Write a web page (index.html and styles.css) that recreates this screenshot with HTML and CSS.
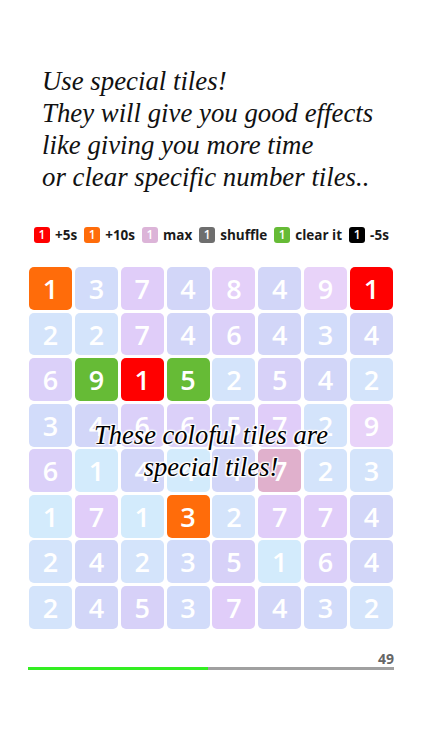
FILE: index.html
```html
<!DOCTYPE html>
<html>
<head>
<meta charset="utf-8">
<link rel="stylesheet" href="styles.css">
</head>
<body>
<div class="page">
  <div class="intro">
    <div>Use special tiles!</div>
    <div>They will give you good effects</div>
    <div>like giving you more time</div>
    <div>or clear specific number tiles..</div>
  </div>

  <div class="legend">
    <div class="item"><span class="badge red">1</span><span class="lbl">+5s</span></div>
    <div class="item"><span class="badge orange">1</span><span class="lbl">+10s</span></div>
    <div class="item"><span class="badge pink">1</span><span class="lbl">max</span></div>
    <div class="item"><span class="badge gray">1</span><span class="lbl">shuffle</span></div>
    <div class="item"><span class="badge green">1</span><span class="lbl">clear it</span></div>
    <div class="item"><span class="badge black">1</span><span class="lbl">-5s</span></div>
  </div>

  <div class="board">
    <div class="grid">
      <div class="t orange">1</div><div class="t n3">3</div><div class="t n7">7</div><div class="t n4">4</div><div class="t n8">8</div><div class="t n4">4</div><div class="t n9">9</div><div class="t red">1</div>
      <div class="t n2">2</div><div class="t n2">2</div><div class="t n7">7</div><div class="t n4">4</div><div class="t n6">6</div><div class="t n4">4</div><div class="t n3">3</div><div class="t n4">4</div>
      <div class="t n6">6</div><div class="t green">9</div><div class="t red">1</div><div class="t green">5</div><div class="t n2">2</div><div class="t n5">5</div><div class="t n4">4</div><div class="t n2">2</div>
      <div class="t n3">3</div><div class="t n4">4</div><div class="t n6">6</div><div class="t n6">6</div><div class="t n5">5</div><div class="t n7">7</div><div class="t n2">2</div><div class="t n9">9</div>
      <div class="t n6">6</div><div class="t n1">1</div><div class="t n4">4</div><div class="t n1">4</div><div class="t n4">4</div><div class="t maxt">7</div><div class="t n2">2</div><div class="t n2">3</div>
      <div class="t n1">1</div><div class="t n7">7</div><div class="t n1">1</div><div class="t orange">3</div><div class="t n2">2</div><div class="t n7">7</div><div class="t n7">7</div><div class="t n4">4</div>
      <div class="t n2">2</div><div class="t n4">4</div><div class="t n2">2</div><div class="t n3">3</div><div class="t n5">5</div><div class="t n1">1</div><div class="t n6">6</div><div class="t n4">4</div>
      <div class="t n2">2</div><div class="t n4">4</div><div class="t n5">5</div><div class="t n3">3</div><div class="t n7">7</div><div class="t n4">4</div><div class="t n3">3</div><div class="t n2">2</div>
    </div>
    <div class="overlay">
      <div>These coloful tiles are</div>
      <div>special tiles!</div>
    </div>
  </div>

  <div class="footer">
    <div class="score">49</div>
    <div class="bar"><div class="fill"></div></div>
  </div>
</div>
</body>
</html>
```
FILE: styles.css
```css
html, body {
  margin: 0;
  padding: 0;
  background: #ffffff;
}
.page {
  width: 422px;
  height: 750px;
  overflow: hidden;
  padding-top: 65px;
  box-sizing: border-box;
}
.intro {
  margin-left: 42px;
  font-family: "Liberation Serif", serif;
  font-style: italic;
  font-size: 26.8px;
  line-height: 32px;
  color: #111;
}
.legend {
  display: flex;
  align-items: center;
  gap: 7px;
  margin-top: 34px;
  margin-left: 34px;
  height: 16px;
  font-family: "Open Sans", sans-serif;
  font-weight: 700;
  font-size: 13.5px;
  color: #1a1a1a;
}
.item {
  display: flex;
  align-items: center;
  gap: 5px;
}
.badge {
  width: 16px;
  height: 16px;
  border-radius: 3px;
  color: #fff;
  font-size: 12px;
  font-weight: 600;
  line-height: 16px;
  text-align: center;
}
.lbl { line-height: 16px; }
.badge.red { background: #ff0000; }
.badge.orange { background: #ff6c0a; }
.badge.pink { background: #dcb4d8; }
.badge.gray { background: #6e6e6e; }
.badge.green { background: #66bb36; }
.badge.black { background: #000000; }

.board {
  position: relative;
  margin-top: 24px;
  margin-left: 29px;
  width: 364px;
}
.grid {
  display: grid;
  grid-template-columns: repeat(8, 1fr);
  grid-auto-rows: 42.9px;
  gap: 2.7px;
}
.t {
  border-radius: 5px;
  color: #fff;
  font-family: "Open Sans", sans-serif;
  font-weight: 600;
  font-size: 27px;
  display: flex;
  align-items: center;
  justify-content: center;
}
.n1 { background: #d3ebfc; }
.n2 { background: #d4e4fb; }
.n3 { background: #d2dcfa; }
.n4 { background: #d2d6f8; }
.n5 { background: #d7d1f8; }
.n6 { background: #dbd0f9; }
.n7 { background: #e0cdf9; }
.n8 { background: #e4d0f9; }
.n9 { background: #e8d3f9; }
.t.orange { background: #ff6c0a; }
.t.red { background: #ff0000; }
.t.green { background: #66bb36; }
.t.maxt { background: #e0b0cc; }

.overlay {
  position: absolute;
  left: 0;
  right: 0;
  top: 152px;
  text-align: center;
  font-family: "Liberation Serif", serif;
  font-style: italic;
  font-size: 26.5px;
  line-height: 32px;
  color: #000;
  text-shadow: 0 0 2px #fff, 0 0 2px #fff, 0 0 3px #fff, 0 0 3px #fff, 1px 1px 1px #fff, -1px -1px 1px #fff, 1px -1px 1px #fff, -1px 1px 1px #fff;
}

.footer {
  margin-top: 21px;
  margin-left: 28px;
  width: 366px;
}
.score {
  text-align: right;
  font-family: "Open Sans", sans-serif;
  font-weight: 700;
  font-size: 14px;
  line-height: 17px;
  color: #666;
}
.bar {
  height: 3px;
  background: #a0a0a0;
}
.fill {
  width: 180px;
  height: 100%;
  background: #33ee22;
}
```
